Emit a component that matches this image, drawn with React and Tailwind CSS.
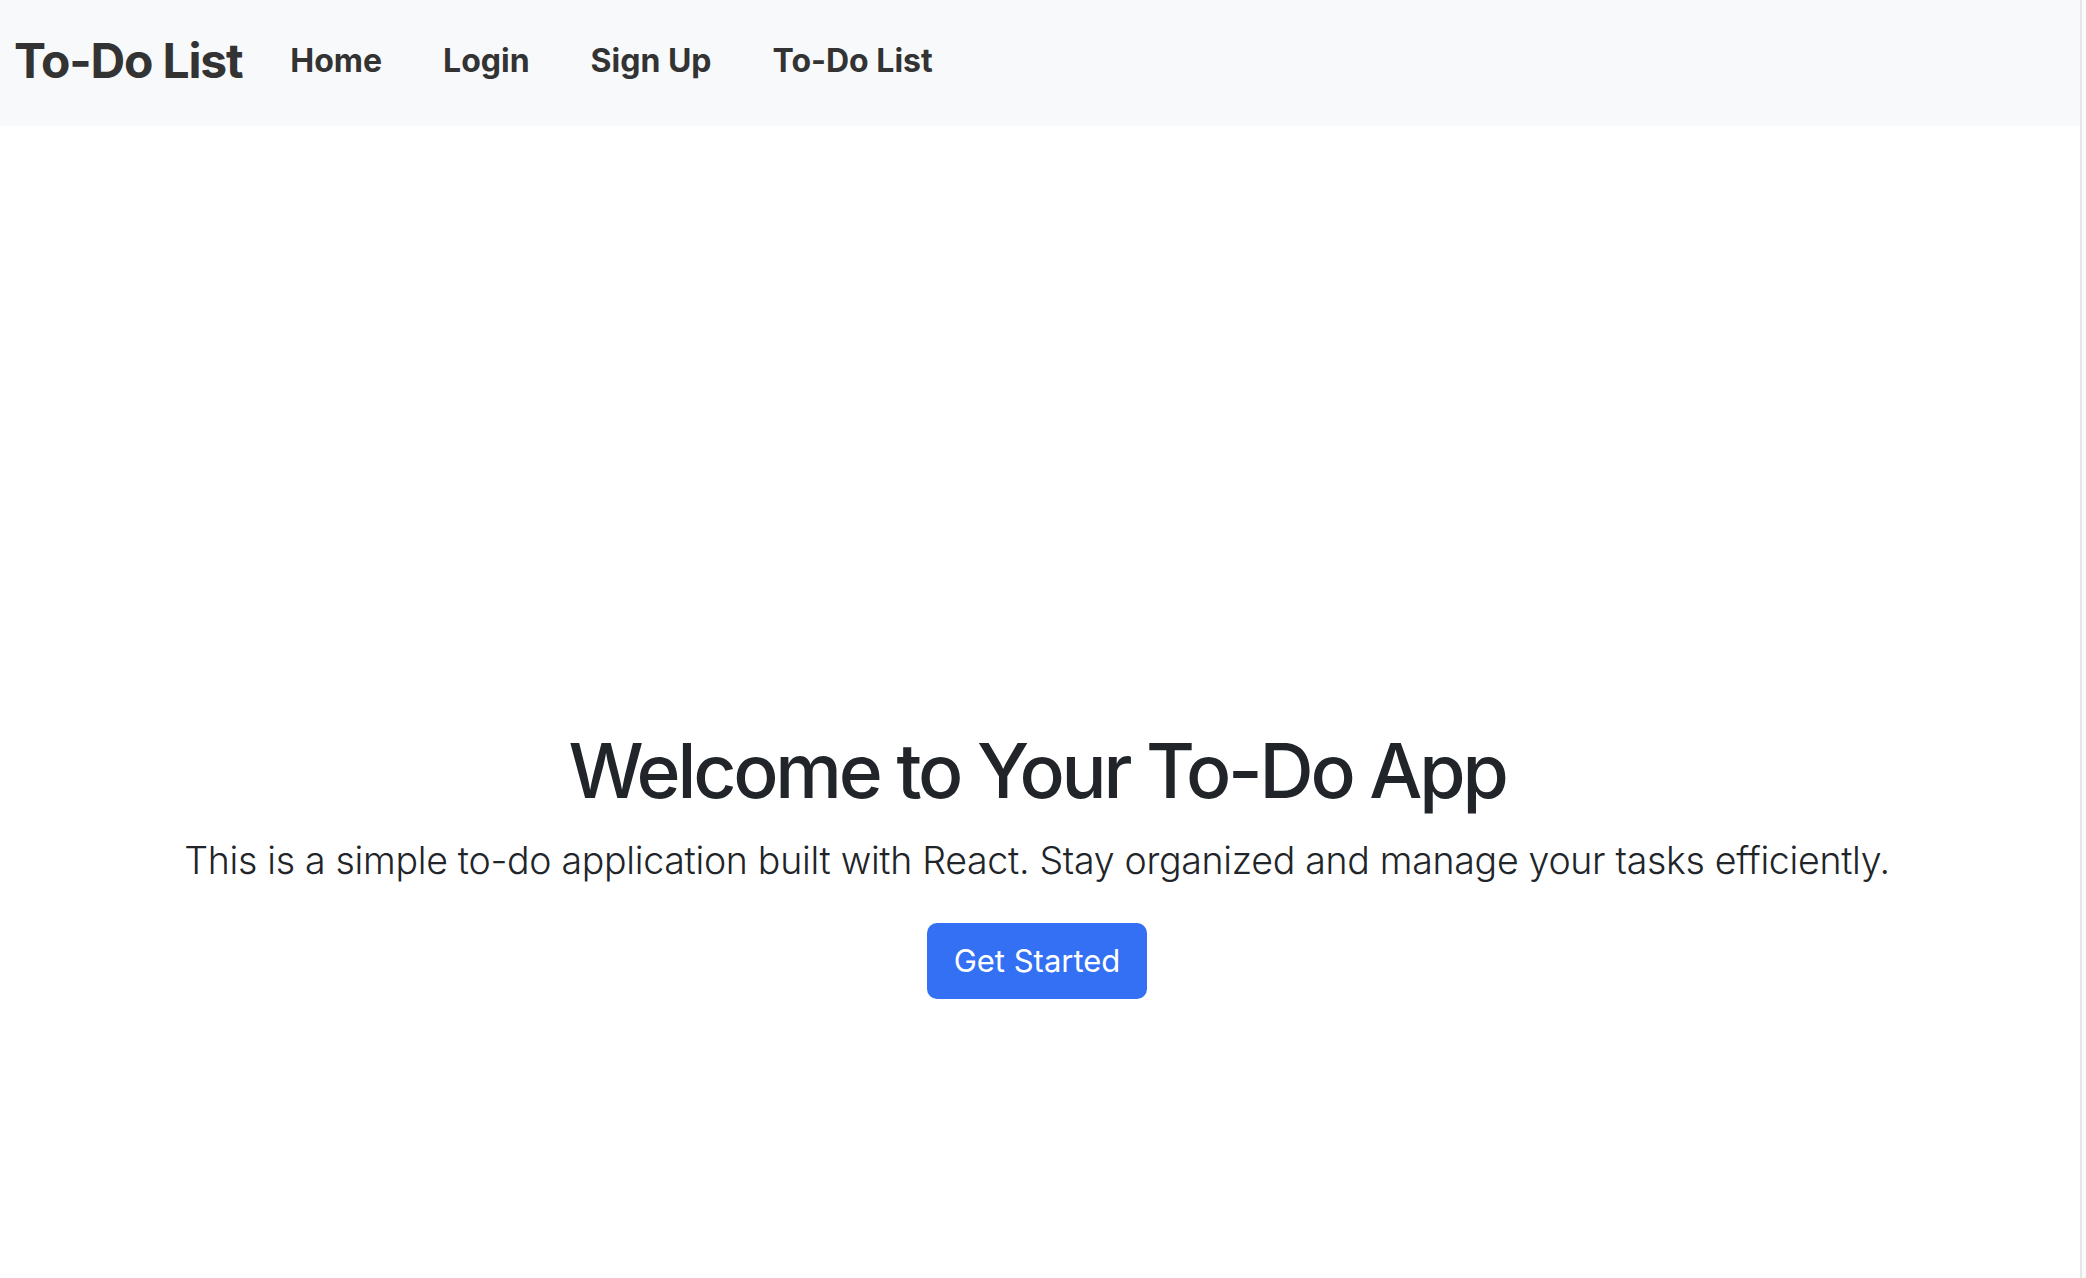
export default function App() {
  return (
    <div className="flex min-h-screen w-full bg-white">
      <div className="flex-1 flex flex-col font-['Inter','Noto_Sans',sans-serif]">
        <nav className="h-[126px] bg-[#f8f9fa] flex items-center pb-[5px] pl-[14px]">
          <span className="text-[48px] leading-none font-bold text-[#333] tracking-[-1.2px]">To-Do List</span>
          <div className="flex items-center gap-[61px] ml-[48px]">
            <a className="text-[32px] leading-none font-bold text-[#333]">Home</a>
            <a className="text-[32px] leading-none font-bold text-[#333]">Login</a>
            <a className="text-[32px] leading-none font-bold text-[#333]">Sign Up</a>
            <a className="text-[32px] leading-none font-bold text-[#333]">To-Do List</a>
          </div>
        </nav>
        <main className="flex flex-col items-center pt-[600px] pr-[6px]">
          <h1 className="text-[75px] leading-[90px] font-medium text-[#212529] mb-[17px] tracking-[-3.2px]">Welcome to Your To-Do App</h1>
          <p className="text-[37.5px] leading-[56px] font-light text-[#212529] mb-[34px] tracking-[-0.3px]">This is a simple to-do application built with React. Stay organized and manage your tasks efficiently.</p>
          <button className="w-[220px] h-[76px] rounded-[10px] bg-[#3370f4] text-white text-[31px] font-normal">Get Started</button>
        </main>
      </div>
      <div className="w-[6px] border-l-2 border-[#e6e6e6] bg-[#fafafa]"></div>
    </div>
  );
}
